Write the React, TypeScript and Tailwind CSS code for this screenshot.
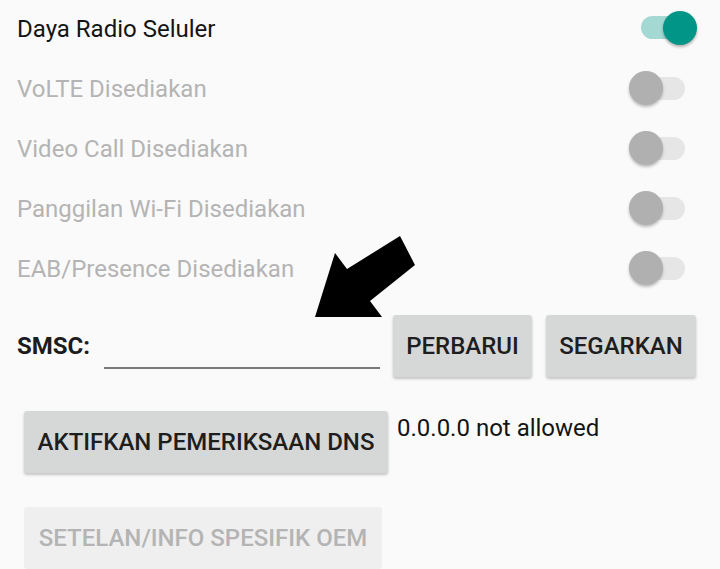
import React from "react";

function Toggle({ on }: { on: boolean }) {
  return (
    <div className="relative w-[68px] h-[34px] shrink-0">
      <div
        className={
          on
            ? "absolute left-[12px] top-[5px] w-[48px] h-[23px] rounded-full bg-[#a3d9d2]"
            : "absolute left-[11px] top-[6px] w-[45px] h-[23px] rounded-full bg-[#e6e6e6]"
        }
      />
      <div
        className={
          on
            ? "absolute left-[34px] top-0 w-[34px] h-[34px] rounded-full bg-[#009587] shadow-[0_2px_3px_rgba(0,0,0,0.3)]"
            : "absolute left-0 top-0 w-[34px] h-[34px] rounded-full bg-[#b0b0b0] shadow-[0_2px_3px_rgba(0,0,0,0.25)]"
        }
      />
    </div>
  );
}

const rows = [
  { label: "Daya Radio Seluler", on: true, enabled: true },
  { label: "VoLTE Disediakan", on: false, enabled: false },
  { label: "Video Call Disediakan", on: false, enabled: false },
  { label: "Panggilan Wi-Fi Disediakan", on: false, enabled: false },
  { label: "EAB/Presence Disediakan", on: false, enabled: false },
];

export default function App() {
  return (
    <div
      className="relative w-[720px] h-[569px] overflow-hidden bg-[#fafafa]"
      style={{ fontFamily: "Roboto, 'Noto Sans', sans-serif" }}
    >
      <div className="flex flex-col -mt-[2px]">
        {rows.map((r) => (
          <div key={r.label} className="flex items-center justify-between h-[60px] pl-[17px] pr-[23px]">
            <span
              className={
                "text-[24px] leading-[28px] pt-[2px] " + (r.enabled ? "text-[#141414]" : "text-[#b4b4b4]")
              }
            >
              {r.label}
            </span>
            <Toggle on={r.on} />
          </div>
        ))}
      </div>

      <div className="flex items-center mt-[17px] h-[62px]">
        <span className="ml-[17px] text-[24px] font-bold text-[#1c1c1c] leading-[28px]">SMSC:</span>
        <div className="ml-[14px] w-[276px] h-[46px] border-b-2 border-[#7a7a7a]" />
        <button className="ml-[13px] w-[139px] h-[62px] rounded-[3px] bg-[#d6d7d7] shadow-[0_2px_3px_rgba(0,0,0,0.22)] text-[24px] font-medium text-[#1e1e1e]">
          PERBARUI
        </button>
        <button className="ml-[14px] w-[150px] h-[62px] rounded-[3px] bg-[#d6d7d7] shadow-[0_2px_3px_rgba(0,0,0,0.22)] text-[24px] font-medium text-[#1e1e1e]">
          SEGARKAN
        </button>
      </div>

      <div className="flex items-start mt-[34px] ml-[24px]">
        <button className="w-[364px] h-[62px] rounded-[3px] bg-[#d6d7d7] shadow-[0_2px_3px_rgba(0,0,0,0.22)] text-[24px] font-medium text-[#1e1e1e]">
          AKTIFKAN PEMERIKSAAN DNS
        </button>
        <span className="ml-[9px] mt-[3px] text-[24px] leading-[28px] text-[#141414]">0.0.0.0 not allowed</span>
      </div>

      <div className="mt-[34px] ml-[24px]">
        <button className="w-[358px] h-[62px] rounded-[3px] bg-[#efefef] text-[24px] font-medium text-[#b4b4b4]">
          SETELAN/INFO SPESIFIK OEM
        </button>
      </div>

      <svg className="absolute left-0 top-0 pointer-events-none" width="720" height="569">
        <polygon
          points="315,317 335,253 347,269 400,236 415,265 370,301 382,317"
          fill="#000"
        />
      </svg>
    </div>
  );
}
